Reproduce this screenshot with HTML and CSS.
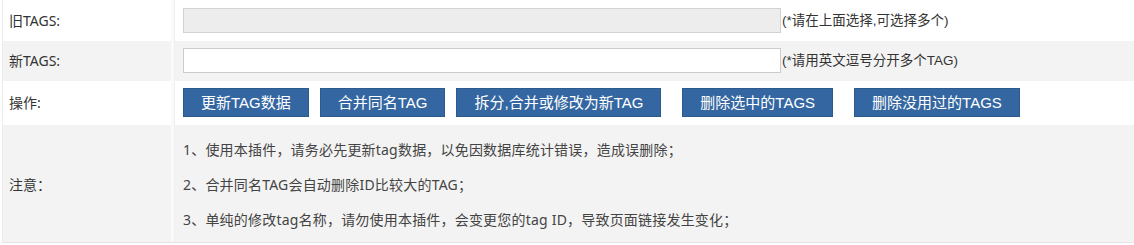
FILE: index.html
```html
<!DOCTYPE html>
<html lang="zh-CN">
<head>
<meta charset="utf-8">
<title>TAG管理</title>
<link rel="stylesheet" href="styles.css">
</head>
<body>
<div class="form-table">
  <div class="row row-first">
    <div class="label">旧TAGS:</div>
    <div class="field">
      <input class="text-input readonly" type="text" readonly>
      <span class="hint">(*请在上面选择,可选择多个)</span>
    </div>
  </div>
  <div class="row row-alt">
    <div class="label">新TAGS:</div>
    <div class="field">
      <input class="text-input" type="text">
      <span class="hint">(*请用英文逗号分开多个TAG)</span>
    </div>
  </div>
  <div class="row row-actions">
    <div class="label">操作:</div>
    <div class="field buttons">
      <button class="btn" type="button">更新TAG数据</button>
      <button class="btn" type="button">合并同名TAG</button>
      <button class="btn" type="button">拆分,合并或修改为新TAG</button>
      <button class="btn btn-spaced" type="button">删除选中的TAGS</button>
      <button class="btn btn-spaced" type="button">删除没用过的TAGS</button>
    </div>
  </div>
  <div class="row row-alt row-notes">
    <div class="label">注意：</div>
    <div class="field notes">
      <p class="note">1、使用本插件，请务必先更新tag数据，以免因数据库统计错误，造成误删除；</p>
      <p class="note">2、合并同名TAG会自动删除ID比较大的TAG；</p>
      <p class="note">3、单纯的修改tag名称，请勿使用本插件，会变更您的tag ID，导致页面链接发生变化；</p>
    </div>
  </div>
</div>
</body>
</html>
```

FILE: styles.css
```css
html, body {
  margin: 0;
  padding: 0;
  background: #ffffff;
}

body {
  font-family: "Microsoft YaHei", "Noto Sans", "Noto Sans CJK SC", sans-serif;
  font-size: 14px;
  color: #333333;
}

.form-table {
  margin-left: 2px;
  border-left: 1px solid #ececec;
  border-bottom: 1px solid #e6e6e6;
  width: calc(100% - 3px);
}

.row {
  display: grid;
  grid-template-columns: 172px 1fr;
  background: #ffffff;
}

.row-alt {
  background: #f3f3f3;
}

.row-first {
  height: 41px;
}

.row-alt {
  height: 40px;
}

.row-actions {
  height: 44px;
}

.row-notes {
  height: 117px;
}

.label {
  display: flex;
  align-items: center;
  padding-left: 6px;
  border-right: 1px solid #eeeeee;
  box-shadow: inset -3px 0 0 #fafafa;
  line-height: 20px;
}

.field {
  display: flex;
  align-items: center;
  padding-left: 8px;
}

.text-input {
  box-sizing: border-box;
  width: 598px;
  height: 25px;
  margin: 0;
  padding: 0 4px;
  border: 1px solid #cccccc;
  background: #ffffff;
  font: inherit;
  outline: none;
}

.text-input.readonly {
  background: #ededed;
  border-color: #d2d2d2;
}

.row-first .field {
  align-items: flex-start;
  padding-top: 8px;
}

.row-alt .field {
  align-items: flex-start;
  padding-top: 7px;
}

.hint {
  margin-left: 1px;
  font-family: "Liberation Sans", "Noto Sans CJK SC", sans-serif;
  font-size: 13.5px;
  line-height: 25px;
  color: #333333;
}

.buttons {
  align-items: flex-start;
  padding-top: 7px;
  gap: 11px;
}

.btn {
  box-sizing: border-box;
  height: 29px;
  margin: 0;
  padding: 0 17px;
  border: 1px solid #2b5b8d;
  background: #3467a1;
  color: #ffffff;
  font-family: "Liberation Sans", "Noto Sans CJK SC", sans-serif;
  font-size: 15px;
  line-height: 27px;
  cursor: pointer;
}

.btn-spaced {
  margin-left: 10px;
}

.notes {
  flex-direction: column;
  align-items: flex-start;
  justify-content: flex-start;
  padding-top: 6px;
}

.note {
  margin: 0;
  line-height: 35px;
  letter-spacing: 0.2px;
  color: #444444;
}

.row-notes .label {
  padding-top: 2px;
}
```
